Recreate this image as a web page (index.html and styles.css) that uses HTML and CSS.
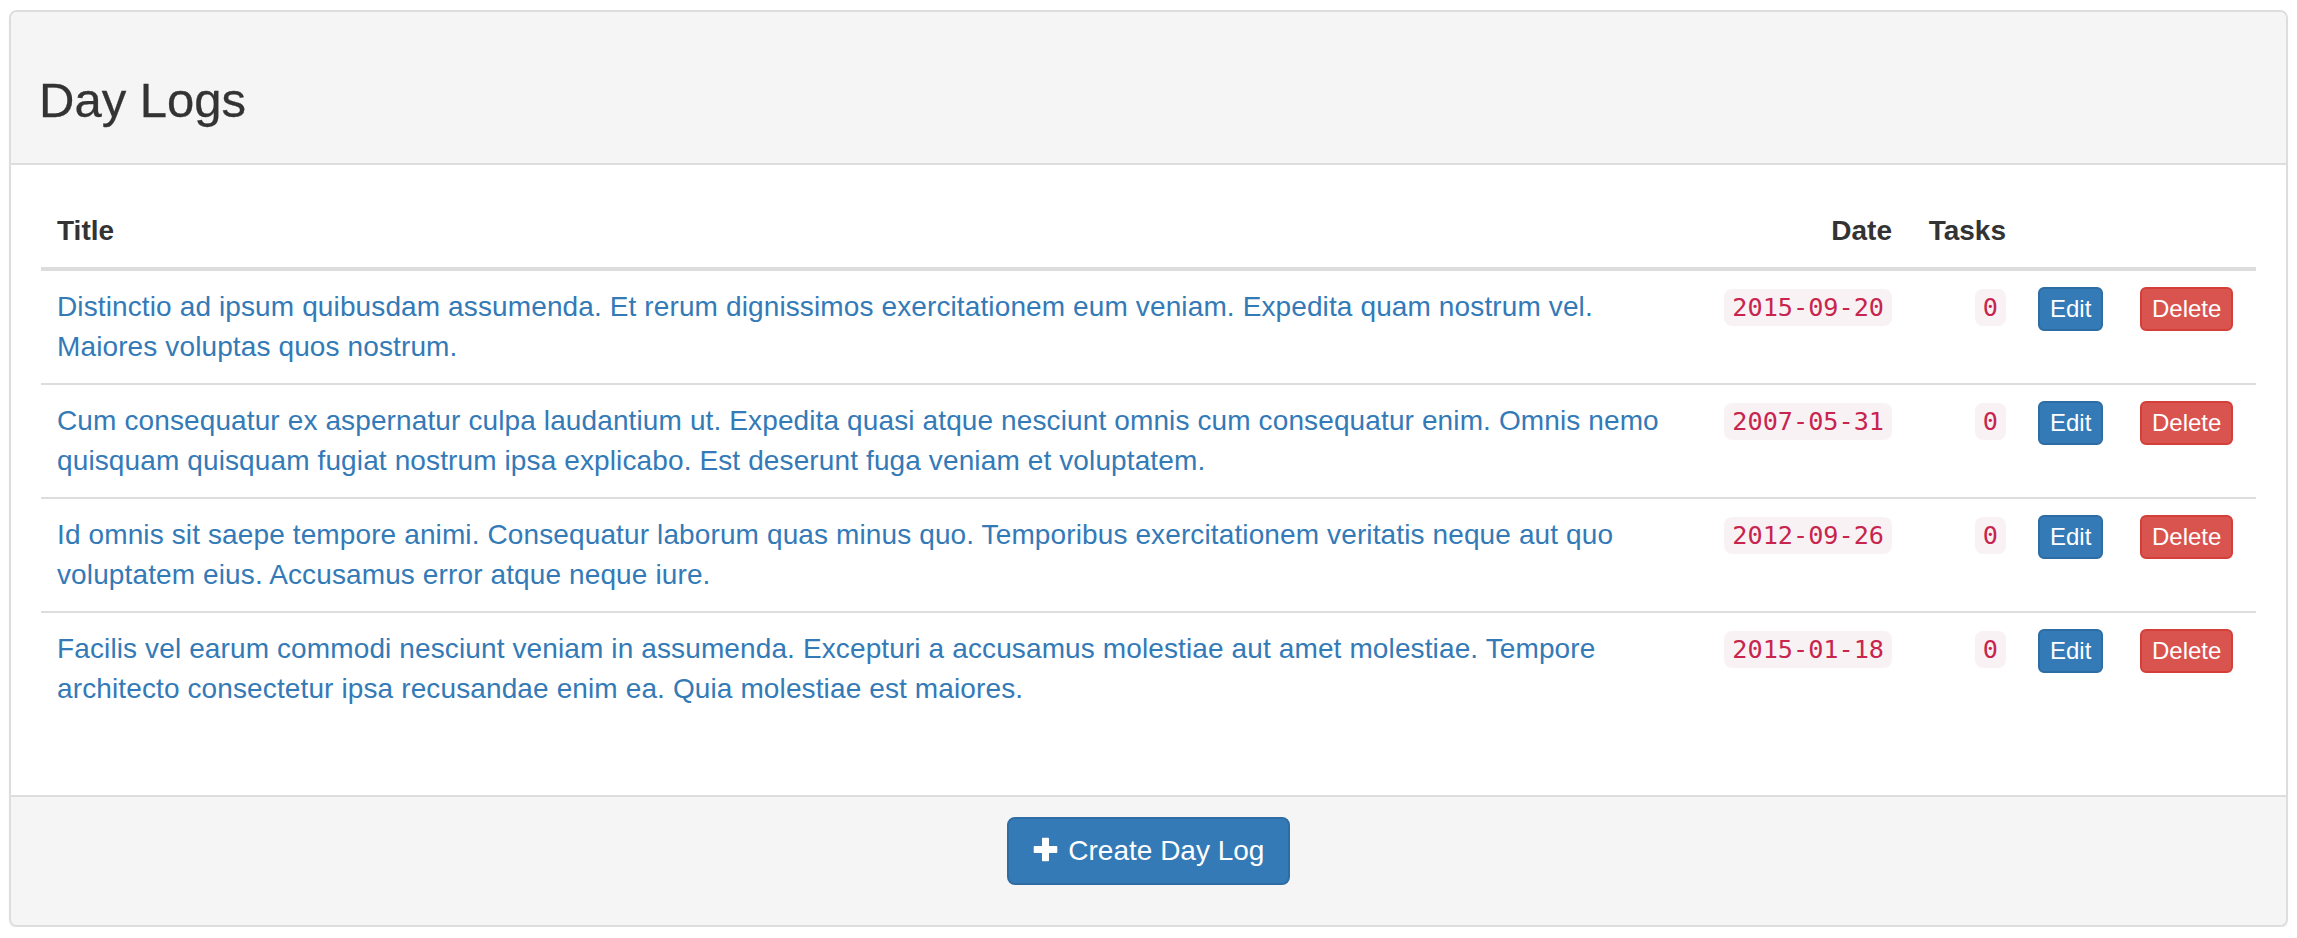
FILE: index.html
```html
<!DOCTYPE html>
<html lang="en">
<head>
<meta charset="utf-8">
<title>Day Logs</title>
<link rel="stylesheet" href="styles.css">
</head>
<body>
<div class="panel">
  <div class="panel-heading">
    <h1 class="panel-title">Day Logs</h1>
  </div>
  <div class="panel-body">
    <table class="table">
      <thead>
        <tr>
          <th class="col-title">Title</th>
          <th class="col-date num">Date</th>
          <th class="col-tasks num">Tasks</th>
          <th class="col-edit"></th>
          <th class="col-delete"></th>
        </tr>
      </thead>
      <tbody>
        <tr>
          <td class="title-cell"><a class="log-link" href="#">Distinctio ad ipsum quibusdam assumenda. Et rerum dignissimos exercitationem eum veniam. Expedita quam nostrum vel. Maiores voluptas quos nostrum.</a></td>
          <td class="num"><code>2015-09-20</code></td>
          <td class="num"><code>0</code></td>
          <td><a class="btn btn-xs btn-primary" href="#">Edit</a></td>
          <td><a class="btn btn-xs btn-danger" href="#">Delete</a></td>
        </tr>
        <tr>
          <td class="title-cell"><a class="log-link" href="#">Cum consequatur ex aspernatur culpa laudantium ut. Expedita quasi atque nesciunt omnis cum consequatur enim. Omnis nemo quisquam quisquam fugiat nostrum ipsa explicabo. Est deserunt fuga veniam et voluptatem.</a></td>
          <td class="num"><code>2007-05-31</code></td>
          <td class="num"><code>0</code></td>
          <td><a class="btn btn-xs btn-primary" href="#">Edit</a></td>
          <td><a class="btn btn-xs btn-danger" href="#">Delete</a></td>
        </tr>
        <tr>
          <td class="title-cell"><a class="log-link" href="#">Id omnis sit saepe tempore animi. Consequatur laborum quas minus quo. Temporibus exercitationem veritatis neque aut quo voluptatem eius. Accusamus error atque neque iure.</a></td>
          <td class="num"><code>2012-09-26</code></td>
          <td class="num"><code>0</code></td>
          <td><a class="btn btn-xs btn-primary" href="#">Edit</a></td>
          <td><a class="btn btn-xs btn-danger" href="#">Delete</a></td>
        </tr>
        <tr>
          <td class="title-cell"><a class="log-link" href="#">Facilis vel earum commodi nesciunt veniam in assumenda. Excepturi a accusamus molestiae aut amet molestiae. Tempore architecto consectetur ipsa recusandae enim ea. Quia molestiae est maiores.</a></td>
          <td class="num"><code>2015-01-18</code></td>
          <td class="num"><code>0</code></td>
          <td><a class="btn btn-xs btn-primary" href="#">Edit</a></td>
          <td><a class="btn btn-xs btn-danger" href="#">Delete</a></td>
        </tr>
      </tbody>
    </table>
  </div>
  <div class="panel-footer">
    <a class="btn btn-primary btn-create" href="#"><svg class="icon-plus" viewBox="0 0 25 25" width="25" height="25" aria-hidden="true"><path d="M9 1.5a0.8 0.8 0 0 1 0.8-0.8h5.4a0.8 0.8 0 0 1 0.8 0.8V9h7.5a0.8 0.8 0 0 1 0.8 0.8v5.4a0.8 0.8 0 0 1-0.8 0.8H16v7.5a0.8 0.8 0 0 1-0.8 0.8H9.8a0.8 0.8 0 0 1-0.8-0.8V16H1.5a0.8 0.8 0 0 1-0.8-0.8V9.8A0.8 0.8 0 0 1 1.5 9H9z" fill="#fff"/></svg> Create Day Log</a>
  </div>
</div>
</body>
</html>
```
FILE: styles.css
```css
* {
  box-sizing: border-box;
}

html, body {
  margin: 0;
  padding: 0;
  background: #fff;
}

body {
  font-family: "Liberation Sans", Arial, Helvetica, sans-serif;
  font-size: 28px;
  line-height: 40px;
  color: #333;
}

.panel {
  margin: 10px 9px 0 9px;
  background: #fff;
  border: 2px solid #ddd;
  border-radius: 8px;
  box-shadow: 0 2px 2px rgba(0, 0, 0, 0.05);
}

.panel-heading {
  background: #f5f5f5;
  border-bottom: 2px solid #ddd;
  border-radius: 6px 6px 0 0;
  padding: 61px 30px 36px 28px;
}

.panel-title {
  margin: 0;
  font-size: 49px;
  line-height: 54px;
  font-weight: 500;
  color: #333;
  -webkit-text-stroke: 0.3px #333;
}

.panel-body {
  padding: 30px;
}

.table {
  width: 100%;
  border-collapse: collapse;
  border-spacing: 0;
  table-layout: fixed;
  margin-bottom: 40px;
}

.table th,
.table td {
  padding: 16px;
  line-height: 40px;
  vertical-align: top;
  text-align: left;
}

.table th {
  font-weight: bold;
  color: #333;
  border-bottom: 4px solid #ddd;
  vertical-align: bottom;
}

.table td {
  border-top: 2px solid #ddd;
}

.table td.title-cell {
  padding-right: 30px;
}

.table .num {
  text-align: right;
}

.col-date {
  width: 200px;
}

.col-tasks {
  width: 114px;
}

.col-edit {
  width: 102px;
}

.col-delete {
  width: 132px;
}

.log-link {
  color: #337ab7;
  text-decoration: none;
  letter-spacing: 0.12px;
}

code {
  font-family: "DejaVu Sans Mono", Menlo, Consolas, "Liberation Mono", monospace;
  font-size: 25.2px;
  padding: 4px 8px;
  color: #c7254e;
  background: #f9f2f4;
  border-radius: 8px;
}

.btn {
  display: inline-block;
  vertical-align: middle;
  text-align: center;
  white-space: nowrap;
  text-decoration: none;
  color: #fff;
  border: 2px solid transparent;
  font-weight: normal;
}

.btn-xs {
  font-size: 24px;
  line-height: 36px;
  padding: 2px 10px;
  border-radius: 6px;
}

.btn-primary {
  background: #337ab7;
  border-color: #2e6da4;
}

.btn-danger {
  background: #d9534f;
  border-color: #d43f3a;
}

.panel-footer {
  background: #f5f5f5;
  border-top: 2px solid #ddd;
  border-radius: 0 0 6px 6px;
  padding: 20px 30px 40px;
  text-align: center;
}

.btn-create {
  font-size: 28px;
  line-height: 40px;
  padding: 12px 24px;
  border-radius: 8px;
}

.icon-plus {
  width: 25px;
  height: 25px;
  vertical-align: -2px;
  margin-right: 3px;
}
```
